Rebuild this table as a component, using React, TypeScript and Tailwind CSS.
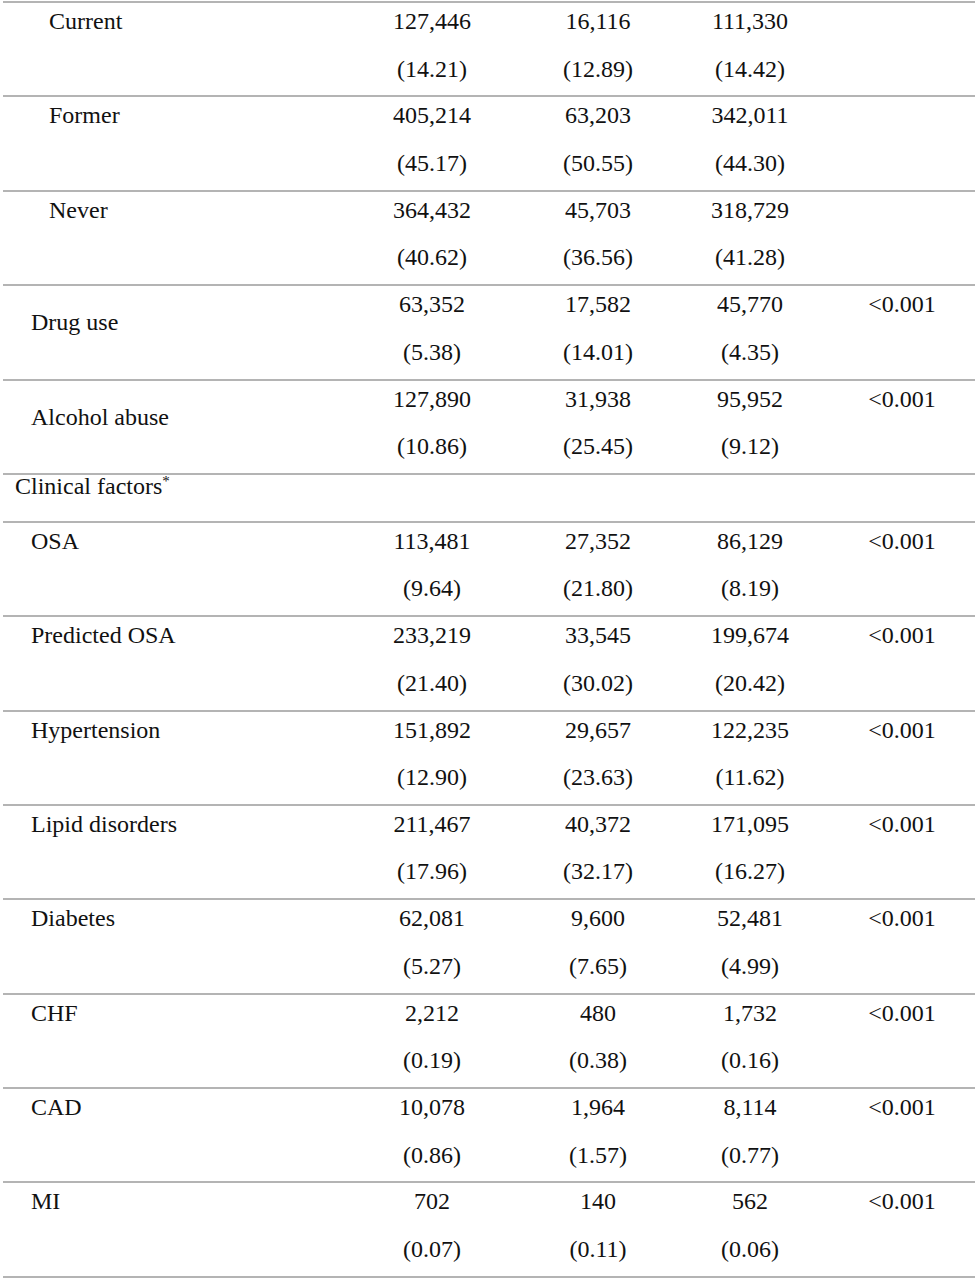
import React from 'react';

type Row = {
  label: string;
  indent: 1 | 2;
  center?: boolean;
  cols: [string, string][];
  p?: string;
};

const rows: Row[] = [
  { label: 'Current', indent: 2, cols: [['127,446', '(14.21)'], ['16,116', '(12.89)'], ['111,330', '(14.42)']] },
  { label: 'Former', indent: 2, cols: [['405,214', '(45.17)'], ['63,203', '(50.55)'], ['342,011', '(44.30)']] },
  { label: 'Never', indent: 2, cols: [['364,432', '(40.62)'], ['45,703', '(36.56)'], ['318,729', '(41.28)']] },
  { label: 'Drug use', indent: 1, center: true, cols: [['63,352', '(5.38)'], ['17,582', '(14.01)'], ['45,770', '(4.35)']], p: '<0.001' },
  { label: 'Alcohol abuse', indent: 1, center: true, cols: [['127,890', '(10.86)'], ['31,938', '(25.45)'], ['95,952', '(9.12)']], p: '<0.001' },
];

const clinical: Row[] = [
  { label: 'OSA', indent: 1, cols: [['113,481', '(9.64)'], ['27,352', '(21.80)'], ['86,129', '(8.19)']], p: '<0.001' },
  { label: 'Predicted OSA', indent: 1, cols: [['233,219', '(21.40)'], ['33,545', '(30.02)'], ['199,674', '(20.42)']], p: '<0.001' },
  { label: 'Hypertension', indent: 1, cols: [['151,892', '(12.90)'], ['29,657', '(23.63)'], ['122,235', '(11.62)']], p: '<0.001' },
  { label: 'Lipid disorders', indent: 1, cols: [['211,467', '(17.96)'], ['40,372', '(32.17)'], ['171,095', '(16.27)']], p: '<0.001' },
  { label: 'Diabetes', indent: 1, cols: [['62,081', '(5.27)'], ['9,600', '(7.65)'], ['52,481', '(4.99)']], p: '<0.001' },
  { label: 'CHF', indent: 1, cols: [['2,212', '(0.19)'], ['480', '(0.38)'], ['1,732', '(0.16)']], p: '<0.001' },
  { label: 'CAD', indent: 1, cols: [['10,078', '(0.86)'], ['1,964', '(1.57)'], ['8,114', '(0.77)']], p: '<0.001' },
  { label: 'MI', indent: 1, cols: [['702', '(0.07)'], ['140', '(0.11)'], ['562', '(0.06)']], p: '<0.001' },
];

const grid = 'grid grid-cols-[336px_186px_146px_158px_146px]';

const DataRow: React.FC<{ row: Row }> = ({ row }) => (
  <div className={`${grid} h-[94.4px] border-t-2 border-[#b4b4b4]`}>
    <div className={`${row.indent === 2 ? 'pl-[46px]' : 'pl-[28px]'} ${row.center ? 'mt-[13px]' : '-mt-[5px]'} leading-[47.5px]`}>
      {row.label}
    </div>
    {row.cols.map((c, i) => (
      <div key={i} className="-mt-[5px] flex flex-col items-center leading-[47.5px]">
        <span>{c[0]}</span>
        <span>{c[1]}</span>
      </div>
    ))}
    <div className="-mt-[5px] text-center leading-[47.5px]">{row.p ?? ''}</div>
  </div>
);

export default function App() {
  return (
    <div className="w-[976px] h-[1280px] overflow-hidden bg-white text-[#111] text-[24px] font-['Liberation_Serif',serif]">
      <div className="ml-[3px] mt-[1px] w-[972px]">
        {rows.map((r) => (
          <DataRow key={r.label} row={r} />
        ))}
        <div className="h-[47.8px] border-t-2 border-[#b4b4b4]">
          <div className="-mt-[12px] pl-[12px] leading-[47.5px]">
            Clinical factors<sup className="text-[15px]">*</sup>
          </div>
        </div>
        {clinical.map((r) => (
          <DataRow key={r.label} row={r} />
        ))}
        <div className="border-t-2 border-[#b4b4b4]" />
      </div>
    </div>
  );
}
